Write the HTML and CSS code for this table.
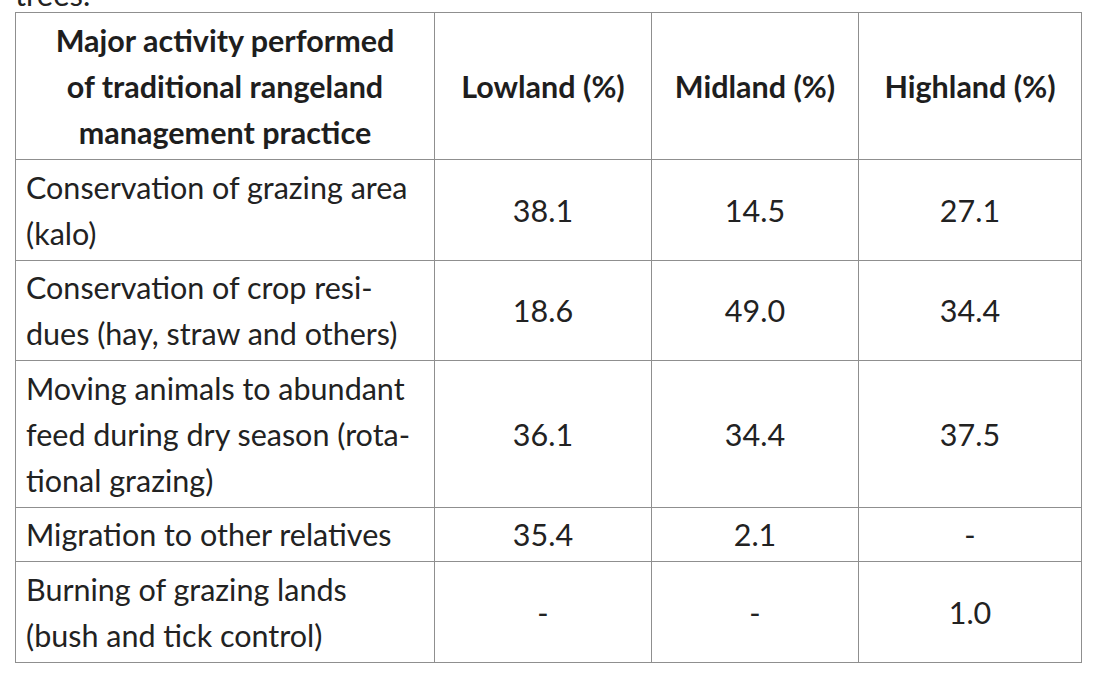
FILE: index.html
```html
<!DOCTYPE html>
<html lang="en">
<head>
<meta charset="utf-8">
<title>Traditional rangeland management practice</title>
<link rel="stylesheet" href="styles.css">
</head>
<body>
<div class="lead"><p class="lead-text">trees.</p></div>
<table class="data">
  <colgroup>
    <col class="c-activity">
    <col class="c-low">
    <col class="c-mid">
    <col class="c-high">
  </colgroup>
  <thead>
    <tr>
      <th>Major activity performed<br>of traditional rangeland<br>management practice</th>
      <th>Lowland (%)</th>
      <th>Midland (%)</th>
      <th>Highland (%)</th>
    </tr>
  </thead>
  <tbody>
    <tr>
      <td class="label">Conservation of grazing area<br>(kalo)</td>
      <td>38.1</td>
      <td>14.5</td>
      <td>27.1</td>
    </tr>
    <tr>
      <td class="label">Conservation of crop resi-<br>dues (hay, straw and others)</td>
      <td>18.6</td>
      <td>49.0</td>
      <td>34.4</td>
    </tr>
    <tr>
      <td class="label">Moving animals to abundant<br>feed during dry season (rota-<br>tional grazing)</td>
      <td>36.1</td>
      <td>34.4</td>
      <td>37.5</td>
    </tr>
    <tr>
      <td class="label">Migration to other relatives</td>
      <td>35.4</td>
      <td>2.1</td>
      <td>-</td>
    </tr>
    <tr>
      <td class="label">Burning of grazing lands<br>(bush and tick control)</td>
      <td>-</td>
      <td>-</td>
      <td>1.0</td>
    </tr>
  </tbody>
</table>
</body>
</html>
```

FILE: styles.css
```css
html, body {
  margin: 0;
  padding: 0;
  background: #ffffff;
}

body {
  font-family: "Lato", "Liberation Sans", sans-serif;
  color: #222222;
}

.lead {
  height: 12px;
  overflow: hidden;
  padding-left: 15px;
}

.lead-text {
  margin: -24px 0 0 0;
  font-size: 31px;
  line-height: 36px;
}

.data {
  margin-left: 15px;
  border-collapse: collapse;
  table-layout: fixed;
  width: 1066px;
  font-size: 30.5px;
  line-height: 46px;
}

.c-activity { width: 419px; }
.c-low { width: 217px; }
.c-mid { width: 207px; }
.c-high { width: 223px; }

.data th,
.data td {
  border: 1px solid #8f8f8f;
  padding: 3.5px 10px 4px 10px;
  text-align: center;
  vertical-align: middle;
  white-space: nowrap;
}

.data th {
  font-weight: 700;
  color: #1e1e1e;
  padding-top: 4px;
}

.data td {
  font-weight: 400;
}

.data td.label {
  text-align: left;
}
```
